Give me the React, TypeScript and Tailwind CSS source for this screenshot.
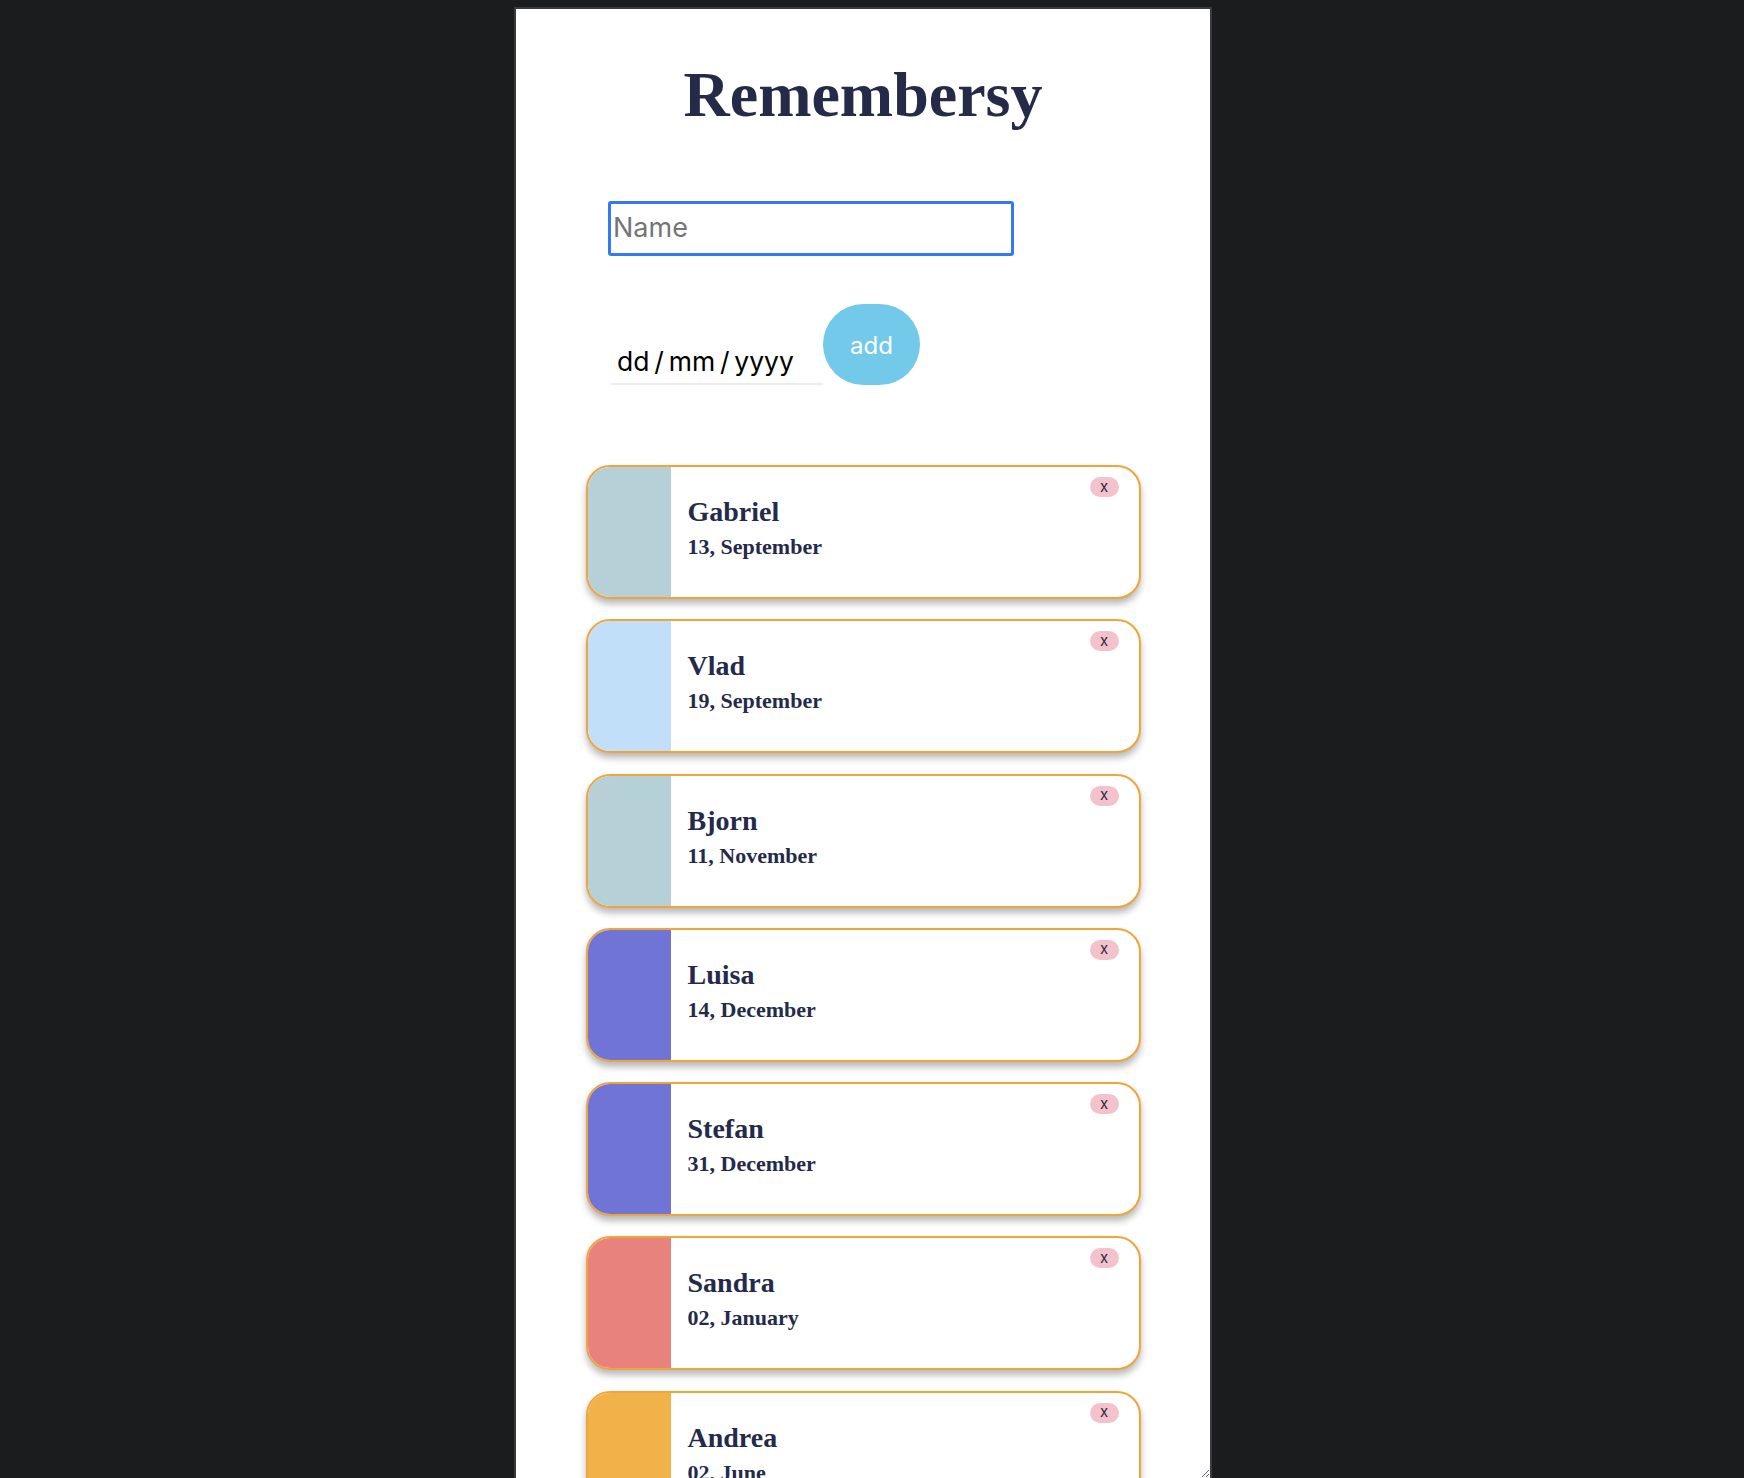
import React from "react"

const people = [
  { name: "Gabriel", date: "13, September", color: "#b5d0d6" },
  { name: "Vlad", date: "19, September", color: "#c2dffa" },
  { name: "Bjorn", date: "11, November", color: "#b5d0d6" },
  { name: "Luisa", date: "14, December", color: "#7074d4" },
  { name: "Stefan", date: "31, December", color: "#7074d4" },
  { name: "Sandra", date: "02, January", color: "#e8827c" },
  { name: "Andrea", date: "02, June", color: "#f2b24a" },
]

function Card({ name, date, color }: { name: string; date: string; color: string }) {
  return (
    <div className="relative flex h-[134px] w-[555px] shrink-0 overflow-hidden rounded-[24px] border-2 border-[#f0a43a] bg-white shadow-[0_5px_7px_rgba(0,0,0,0.28)]">
      <div className="w-[83px] shrink-0" style={{ backgroundColor: color }} />
      <div className="pl-[17px] pt-[29px] font-['Liberation_Serif',serif] font-bold text-[#252a4a]">
        <div className="text-[28px] leading-[32px]">{name}</div>
        <div className="mt-[6px] text-[22px] leading-[26px]">{date}</div>
      </div>
      <button className="absolute right-[20px] top-[10px] flex h-[20px] w-[29px] items-center justify-center rounded-full bg-[#f4c2cc] pb-[2px] font-['Inter',sans-serif] text-[15px] leading-none text-[#2b2b3b]">
        x
      </button>
    </div>
  )
}

export default function App() {
  return (
    <div className="h-[1478px] overflow-hidden bg-[#1b1c1e] pt-[7px]">
      <div className="ml-[514px] h-[1473px] w-[698px] resize overflow-hidden border-2 border-[#3b3b3d] bg-white">
        <h1 className="mt-[54px] text-center font-['Liberation_Serif',serif] text-[64px] font-bold leading-[64px] text-[#252a48]">
          Remembersy
        </h1>

        <div className="ml-[92px] mt-[74px] flex h-[55px] w-[406px] items-center rounded-[3px] border-[3px] border-[#3478f6] pl-[2px] font-['Inter',sans-serif] text-[27px] text-[#757575]">
          Name
        </div>

        <div className="ml-[95px] mt-[48px] flex items-end font-['Inter',sans-serif]">
          <div className="w-[212px] border-b-2 border-[#ececec] pb-[7px] pl-[6px] text-[26.5px] leading-[30px] text-black">
            dd{"\u2009"}/{"\u2009"}mm{"\u2009"}/{"\u2009"}yyyy
          </div>
          <button className="flex h-[81px] w-[97px] items-center justify-center rounded-full bg-[#72c9e9] pt-[3px] text-[24px] text-white">
            add
          </button>
        </div>

        <div className="mt-[80px] flex flex-col items-center gap-[20.3px]">
          {people.map((p) => (
            <Card key={p.name} {...p} />
          ))}
        </div>
      </div>
    </div>
  )
}
